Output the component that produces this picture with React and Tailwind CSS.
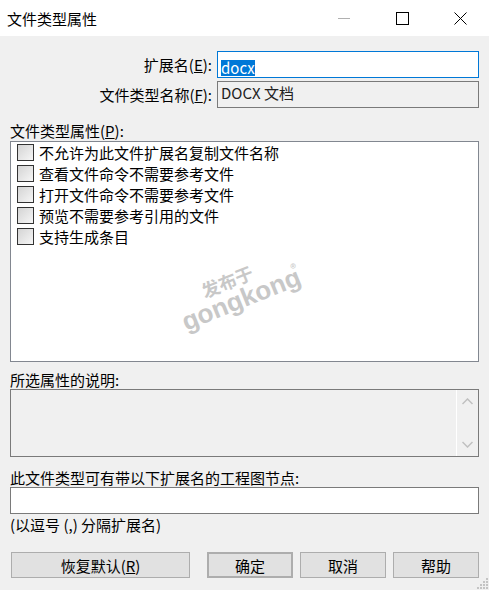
import React from "react";

const font = { fontFamily: '"Noto Sans CJK SC", "Noto Sans", sans-serif' };

const items = [
  "不允许为此文件扩展名复制文件名称",
  "查看文件命令不需要参考文件",
  "打开文件命令不需要参考文件",
  "预览不需要参考引用的文件",
  "支持生成条目",
];

function Checkbox() {
  return (
    <span className="w-[17px] h-[17px] border border-[#333333] bg-linear-to-br from-[#d4d4d4] to-[#f6f6f6] shrink-0" />
  );
}

function Btn({ children, className = "" }) {
  return (
    <button
      className={
        "h-[26px] bg-[#e1e1e1] border border-[#adadad] text-[15px] leading-none text-black flex items-center justify-center " +
        className
      }
    >
      {children}
    </button>
  );
}

export default function App() {
  return (
    <div className="w-[489px] h-[590px] bg-[#f0f0f0] flex flex-col relative text-black" style={font}>
      {/* title bar */}
      <div className="h-[36px] bg-white flex items-center shrink-0">
        <span className="pl-[7px] text-[15px] leading-none">文件类型属性</span>
        <div className="ml-auto flex items-center h-full">
          <div className="w-[58px] h-full flex items-center justify-center">
            <svg width="12" height="12" viewBox="0 0 12 12">
              <line x1="0" y1="6.5" x2="12" y2="6.5" stroke="#b0b0b0" strokeWidth="1" />
            </svg>
          </div>
          <div className="w-[58px] h-full flex items-center justify-center">
            <svg width="13" height="13" viewBox="0 0 13 13">
              <rect x="0.5" y="0.5" width="12" height="12" fill="none" stroke="#000" strokeWidth="1" />
            </svg>
          </div>
          <div className="w-[58px] h-full flex items-center justify-center">
            <svg width="13" height="13" viewBox="0 0 13 13">
              <path d="M0.5 0.5 L12.5 12.5 M12.5 0.5 L0.5 12.5" stroke="#000" strokeWidth="1" />
            </svg>
          </div>
        </div>
      </div>

      <div className="flex flex-col px-[10px]">
        {/* extension */}
        <div className="flex items-center mt-[15px] h-[27px]">
          <span className="w-[202px] text-right text-[15px] leading-none">
            扩展名(<span className="underline">E</span>):
          </span>
          <div className="ml-[5px] flex-1 h-full bg-white border border-[#0078d7] pl-[3px] pt-[3px]">
            <span className="bg-[#0078d7] text-white text-[15px] leading-[16px] inline-block">docx</span>
          </div>
        </div>
        <div className="flex items-center mt-[3px] h-[27px]">
          <span className="w-[202px] text-right text-[15px] leading-none">
            文件类型名称(<span className="underline">F</span>):
          </span>
          <div className="ml-[5px] flex-1 h-full bg-[#f0f0f0] border border-[#7a7a7a] pl-[3px] pt-[3px] text-[15px] leading-[16px] text-[#222]">
            DOCX 文档
          </div>
        </div>

        {/* properties list */}
        <div className="mt-[12px] h-[20px] flex items-center text-[15px] leading-none">
          文件类型属性(<span className="underline">P</span>):
        </div>
        <div className="mt-[1px] h-[221px] bg-white border border-[#828790] relative pl-[6px]">
          {items.map((t) => (
            <div key={t} className="h-[21px] flex items-center gap-[5px]">
              <Checkbox />
              <span className="text-[15px] leading-none">{t}</span>
            </div>
          ))}
          {/* watermark */}
          <span className="absolute left-[216px] top-[139px] -translate-x-1/2 -translate-y-1/2 -rotate-[22deg] text-[#c8c8c8] text-[18px] leading-none font-bold pointer-events-none">
            发布于
          </span>
          <span
            className="absolute left-[230px] top-[157px] -translate-x-1/2 -translate-y-1/2 -rotate-[22deg] text-[#c8c8c8] text-[26px] leading-none font-bold pointer-events-none"
            style={{ fontFamily: '"Liberation Sans", Arial, sans-serif' }}
          >
            gongkong
          </span>
          <span className="absolute left-[282px] top-[126px] -translate-x-1/2 -translate-y-1/2 text-[#c8c8c8] text-[12px] leading-none pointer-events-none">
            ®
          </span>
        </div>

        {/* description */}
        <div className="mt-[8px] h-[19px] flex items-center text-[15px] leading-none">所选属性的说明:</div>
        <div className="h-[68px] border border-[#7a7a7a] bg-[#f0f0f0] flex">
          <div className="flex-1" />
          <div className="w-[22px] border-l border-white flex flex-col items-center justify-between py-[8px]">
            <svg width="11" height="7" viewBox="0 0 11 7">
              <path d="M0.5 6 L5.5 1 L10.5 6" fill="none" stroke="#c0c0c0" strokeWidth="1.5" />
            </svg>
            <svg width="11" height="7" viewBox="0 0 11 7">
              <path d="M0.5 1 L5.5 6 L10.5 1" fill="none" stroke="#c0c0c0" strokeWidth="1.5" />
            </svg>
          </div>
        </div>

        {/* extensions */}
        <div className="mt-[11px] h-[19px] flex items-center text-[15px] leading-none">此文件类型可有带以下扩展名的工程图节点:</div>
        <div className="h-[27px] bg-white border border-[#7a7a7a]" />
        <div className="h-[20px] flex items-center text-[15px] leading-none">(以逗号 (,) 分隔扩展名)</div>

        {/* buttons */}
        <div className="mt-[18px] flex items-center pl-[1px]">
          <Btn className="w-[179px]">
            恢复默认(<span className="underline">R</span>)
          </Btn>
          <Btn className="w-[86px] ml-[17px] border-2 border-[#0078d7]">确定</Btn>
          <Btn className="w-[86px] ml-[7px]">取消</Btn>
          <Btn className="w-[86px] ml-[7px]">帮助</Btn>
        </div>
      </div>

      {/* size grip */}
      <svg className="absolute right-[1px] bottom-[1px]" width="11" height="11" viewBox="0 0 11 11">
        {[
          [9, 0], [9, 3], [6, 3], [9, 6], [6, 6], [3, 6], [9, 9], [6, 9], [3, 9], [0, 9],
        ].map(([x, y]) => (
          <rect key={x + "-" + y} x={x} y={y} width="2" height="2" fill="#c4c4c4" />
        ))}
      </svg>
    </div>
  );
}
